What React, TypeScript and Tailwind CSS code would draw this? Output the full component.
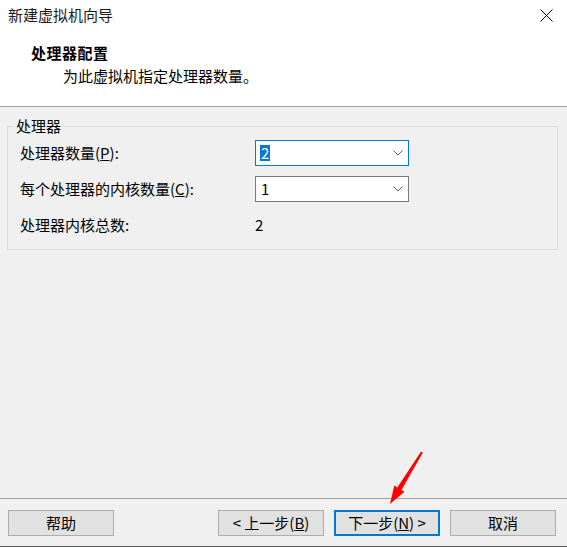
const Chevron = () => (
  <svg width="10" height="6" viewBox="0 0 10 6" className="shrink-0">
    <path d="M0.5 0.5 L5 5 L9.5 0.5" fill="none" stroke="#606060" strokeWidth="1" />
  </svg>
);

const Combo = ({ value, focused }: { value: string; focused?: boolean }) => (
  <div
    className={`flex h-[26px] w-[154px] items-center justify-between bg-white pl-[4px] pr-[5px] ${
      focused ? "border border-[#0078d7]" : "border border-[#7a7a7a]"
    }`}
  >
    {focused ? (
      <span className="bg-[#0078d7] px-[1px] leading-[16px] text-white">{value}</span>
    ) : (
      <span className="px-[1px] leading-[16px] text-black">{value}</span>
    )}
    <Chevron />
  </div>
);

const Button = ({ children, primary }: { children: React.ReactNode; primary?: boolean }) => (
  <button
    className={`flex h-[26px] w-[106px] items-center justify-center bg-[#e1e1e1] text-[15px] leading-[20px] text-black ${
      primary ? "border-2 border-[#0078d7]" : "border border-[#adadad]"
    }`}
  >
    {children}
  </button>
);

export default function App() {
  return (
    <div className="relative flex h-[547px] w-[567px] flex-col overflow-hidden bg-[#f0f0f0] font-['Noto_Sans_CJK_SC',sans-serif] text-[15px] text-black">
      {/* Header */}
      <div className="h-[107px] border-b border-[#a0a0a0] bg-white pt-[5px]">
        <div className="flex h-[20px] items-center justify-between pl-[8px] pr-[14px]">
          <span className="leading-[20px] text-[#1a1a1a]">新建虚拟机向导</span>
          <svg width="13" height="13" viewBox="0 0 13 13">
            <path d="M0.5 0.5 L12.5 12.5 M12.5 0.5 L0.5 12.5" stroke="#000" strokeWidth="1" fill="none" />
          </svg>
        </div>
        <div className="mt-[18px] pl-[31px] font-bold leading-[20px] tracking-[0.5px]">处理器配置</div>
        <div className="mt-[3px] pl-[63px] leading-[20px]">为此虚拟机指定处理器数量。</div>
      </div>

      {/* Body */}
      <div className="flex-1 px-[7px] pt-[19px]">
        <div className="relative w-[551px] border border-[#dcdcdc] pb-[11px] pl-[12px] pt-[13px]">
          <span className="absolute -top-[11px] left-[6px] bg-[#f0f0f0] px-[2px] leading-[20px]">处理器</span>
          <div className="grid grid-cols-[235px_1fr] gap-y-[10px]">
            <div className="flex h-[26px] items-center">
              处理器数量(<span className="underline">P</span>):
            </div>
            <Combo value="2" focused />
            <div className="flex h-[26px] items-center">
              每个处理器的内核数量(<span className="underline">C</span>):
            </div>
            <Combo value="1" />
            <div className="flex h-[26px] items-center">处理器内核总数:</div>
            <div className="flex h-[26px] items-center">2</div>
          </div>
        </div>
      </div>

      {/* Footer */}
      <div className="flex items-center border-y border-t-[#a0a0a0] border-b-[#5a5a5a] pb-[10px] pl-[8px] pt-[11px]">
        <Button>帮助</Button>
        <div className="ml-[104px] flex gap-[10px]">
          <Button>
            &lt; 上一步(<span className="underline">B</span>)
          </Button>
          <Button primary>
            下一步(<span className="underline">N</span>) &gt;
          </Button>
          <Button>取消</Button>
        </div>
      </div>

      {/* Annotation arrow */}
      <svg className="pointer-events-none absolute left-0 top-0" width="567" height="547">
        <polygon
          points="422.9,452.5 421.1,451.5 397.3,487.4 394.3,485.6 390,504 404.5,491.8 401.5,490"
          fill="#ff0000"
        />
      </svg>
    </div>
  );
}
